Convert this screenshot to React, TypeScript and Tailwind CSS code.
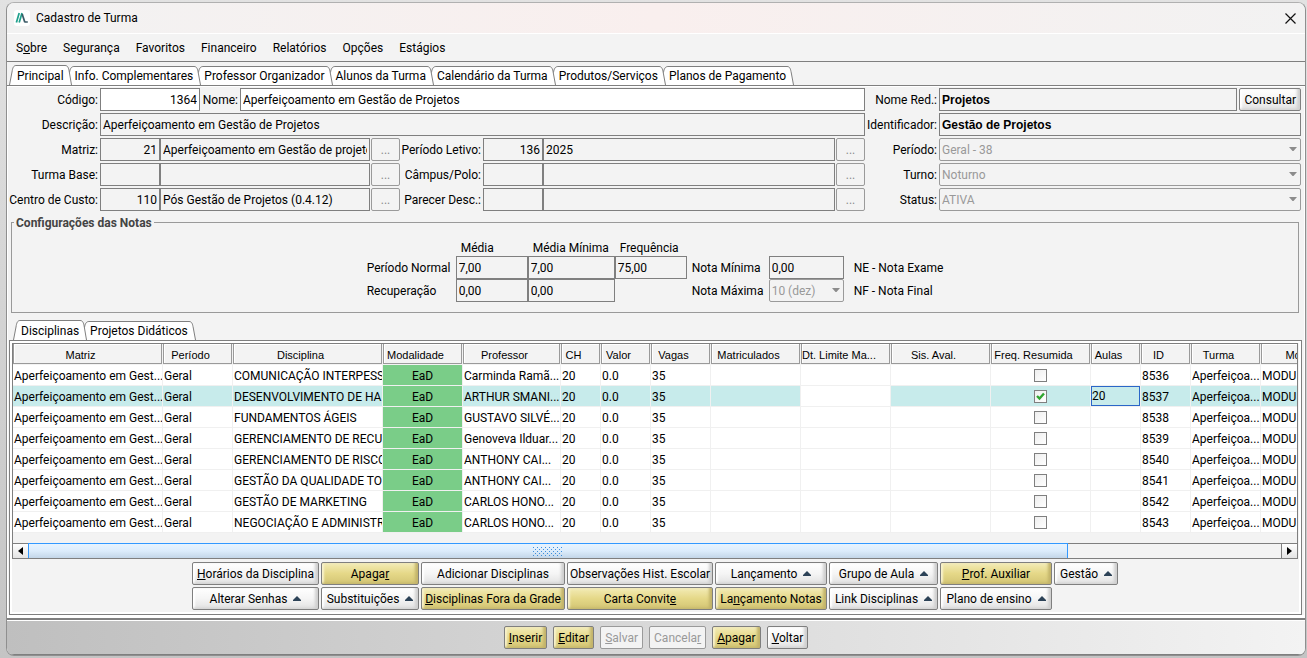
import { Fragment, type ReactNode } from "react";
import clsx from "clsx";

type Row = {
  disciplina: string;
  professor: string;
  id: string;
  selected?: boolean;
};

const rows: Row[] = [
  { disciplina: "COMUNICAÇÃO INTERPESS", professor: "Carminda Ramã...", id: "8536" },
  { disciplina: "DESENVOLVIMENTO DE HAB", professor: "ARTHUR SMANI...", id: "8537", selected: true },
  { disciplina: "FUNDAMENTOS ÁGEIS", professor: "GUSTAVO SILVÉ...", id: "8538" },
  { disciplina: "GERENCIAMENTO DE RECUR", professor: "Genoveva Ilduar...", id: "8539" },
  { disciplina: "GERENCIAMENTO DE RISCO", professor: "ANTHONY CAI...", id: "8540" },
  { disciplina: "GESTÃO DA QUALIDADE TOT", professor: "ANTHONY CAI...", id: "8541" },
  { disciplina: "GESTÃO DE MARKETING", professor: "CARLOS HONO...", id: "8542" },
  { disciplina: "NEGOCIAÇÃO E ADMINISTR", professor: "CARLOS HONO...", id: "8543" }
];

const columns = [
  { label: "Matriz", width: "w-[150px]" },
  { label: "Período", width: "w-[70px]" },
  { label: "Disciplina", width: "w-[150px]" },
  { label: "Modalidade", width: "w-[80px]" },
  { label: "Professor", width: "w-[98px]" },
  { label: "CH", width: "w-[40px]" },
  { label: "Valor", width: "w-[50px]" },
  { label: "Vagas", width: "w-[60px]" },
  { label: "Matriculados", width: "w-[90px]" },
  { label: "Dt. Limite Ma...", width: "w-[90px]" },
  { label: "Sis. Aval.", width: "w-[100px]" },
  { label: "Freq. Resumida", width: "w-[100px]" },
  { label: "Aulas", width: "w-[50px]" },
  { label: "ID", width: "w-[50px]" },
  { label: "Turma", width: "w-[70px]" },
  { label: "Módulo", width: "w-[100px]" }
];

const menu = ["Segurança", "Favoritos", "Financeiro", "Relatórios", "Opções", "Estágios"];

const mainTabs = [
  "Principal",
  "Info. Complementares",
  "Professor Organizador",
  "Alunos da Turma",
  "Calendário da Turma",
  "Produtos/Serviços",
  "Planos de Pagamento"
];

function TabStrip({ tabs }: { tabs: string[] }) {
  return (
    <div role="tablist" className="flex h-5 items-end">
      <svg width="7" height="20" viewBox="0 0 7 20" fill="#fff" stroke="#7f7f7f" className="shrink-0">
        <path d="M0.5 20 L3 7 C3.6 3 4.5 0.5 7 0.5 V20" stroke="none" />
        <path d="M0.5 20 L3 7 C3.6 3 4.5 0.5 7 0.5" fill="none" />
      </svg>
      {tabs.map((tab, i) => {
        const last = i === tabs.length - 1;
        return (
          <Fragment key={tab}>
            <button
              role="tab"
              aria-selected={i === 0}
              className={clsx(
                "shrink-0 whitespace-nowrap border-t border-[#7f7f7f] bg-white px-px leading-[18px]",
                i === 0 ? "h-5" : "h-[19px]"
              )}
            >
              {tab}
            </button>
            <svg width={last ? 8 : 9} height="20" viewBox={last ? "0 0 8 20" : "0 0 9 20"} fill="none" className="shrink-0">
              {!last && <path d="M9 1.5 C6.5 1.5 5 4 4 8 L6.5 20 H9 Z" fill="#fff" />}
              <path
                d={i === 0 ? "M0 0.5 C3 0.5 3.5 3 4.3 7 L6.5 20 H0 Z" : "M0 1.5 C3 1.5 3.5 4 4.3 8 L6.5 20 H0 Z"}
                fill="#fff"
              />
              <path
                d={i === 0 ? "M0 0.5 C3 0.5 3.5 3 4.3 7 L6.5 20" : "M0 1.5 C3 1.5 3.5 4 4.3 8 L6.5 20"}
                stroke="#7f7f7f"
              />
              {!last && <path d="M9 1.5 C6.5 1.5 5 3.5 4.5 7.5" stroke="#7f7f7f" />}
            </svg>
          </Fragment>
        );
      })}
    </div>
  );
}

function Field({
  id,
  label,
  value = "",
  className
}: {
  id: string;
  label?: string;
  value?: string;
  className?: string;
}) {
  return (
    <input
      id={id}
      aria-label={label}
      defaultValue={value}
      className={clsx("h-[23px] min-w-0 border border-[#7f7f7f] px-0.5 outline-none", className)}
    />
  );
}

function FieldLabel({ htmlFor, className, children }: { htmlFor: string; className: string; children: ReactNode }) {
  return (
    <label htmlFor={htmlFor} className={clsx("shrink-0 whitespace-nowrap text-right", className)}>
      {children}
    </label>
  );
}

function LookupButton({ label }: { label: string }) {
  return (
    <button
      disabled
      aria-label={label}
      className="ml-px h-[23px] w-[29px] shrink-0 rounded-xs border border-[#9a9a9a] text-[#8c8c8c]"
    >
      ...
    </button>
  );
}

function Lookup({
  id,
  label,
  labelWidth,
  code,
  text,
  textWidth
}: {
  id: string;
  label: string;
  labelWidth: string;
  code?: string;
  text?: string;
  textWidth: string;
}) {
  return (
    <>
      <FieldLabel htmlFor={id} className={clsx("mr-0.5", labelWidth)}>
        {label}
      </FieldLabel>
      <Field id={id} value={code} className="w-[60px] shrink-0 text-right" />
      <Field id={`${id}-text`} label={label} value={text} className={textWidth} />
      <LookupButton label={`Buscar ${label}`} />
    </>
  );
}

function Combo({ id, value, label }: { id: string; value: string; label?: string }) {
  return (
    <div className="relative flex-1">
      <select
        id={id}
        disabled
        aria-label={label}
        className="h-[23px] w-full appearance-none rounded-xs border border-[#9a9a9a] px-0.5 text-[#999] opacity-100"
      >
        <option>{value}</option>
      </select>
      <svg width="8" height="4" viewBox="0 0 8 4" className="pointer-events-none absolute right-1 top-[9px]">
        <path d="M0 0H8L4.5 4H3.5Z" fill="#8c8c8c" />
      </svg>
    </div>
  );
}

function ActionButton({
  children,
  gold,
  menu: hasMenu,
  disabled
}: {
  children: ReactNode;
  gold?: boolean;
  menu?: boolean;
  disabled?: boolean;
}) {
  return (
    <button
      disabled={disabled}
      className={clsx(
        "flex h-[23px] items-center justify-center gap-1.5 whitespace-nowrap rounded-xs border px-1",
        disabled && "border-[#9a9a9a] bg-[#f3f3f3] text-[#999]",
        !disabled && "border-[#7f7f7f]",
        gold &&
          "bg-linear-to-b from-[#f3ebb5] via-[#e5d888] to-[#d3c574] shadow-[inset_-3px_-1px_3px_#c2b36a,inset_2px_1px_2px_#f8f2cc]",
        !gold &&
          !disabled &&
          "bg-linear-to-b from-white via-[#f5f5f5] to-[#e2e2e2] shadow-[inset_-3px_-1px_3px_#cfcfcf,inset_2px_1px_2px_#fff]"
      )}
    >
      <span>{children}</span>
      {hasMenu && (
        <svg width="8" height="5" viewBox="0 0 8 5">
          <path d="M4 0L8 4V5H0V4Z" fill="#2c4257" />
        </svg>
      )}
    </button>
  );
}

function DisciplineTable() {
  return (
    <div className="overflow-hidden">
      <table className="w-[1348px] table-fixed border-separate border-spacing-0">
        <thead>
          <tr className="h-[21px]">
            {columns.map((column) => (
              <th key={column.label} className={clsx("p-0 font-normal", column.width)}>
                <div className="mr-px mb-px h-5 overflow-hidden whitespace-nowrap border border-t-0 border-[#9a9a9a] bg-[#f3f3f3] pr-3.5 font-['Liberation_Sans',Arial,sans-serif] text-[11px] leading-[22px] shadow-[inset_1px_1px_0_#fff]">
                  {column.label}
                </div>
              </th>
            ))}
          </tr>
        </thead>
        <tbody>
          {rows.map((row) => (
            <tr
              key={row.id}
              className={clsx(
                "h-[21px] *:overflow-hidden *:whitespace-nowrap *:border-r *:border-b *:border-[#f0f0f0] *:px-px *:pt-0.5 *:pb-0",
                row.selected ? "bg-[#c7ebeb]" : "bg-white"
              )}
            >
              <td>Aperfeiçoamento em Gest...</td>
              <td>Geral</td>
              <td>{row.disciplina}</td>
              <td className="bg-[#7acd88] text-center">EaD</td>
              <td>{row.professor}</td>
              <td>20</td>
              <td>0.0</td>
              <td>35</td>
              <td />
              <td className="bg-white" />
              <td />
              <td className="pt-0!">
                <label className="relative mx-auto block size-[13px]">
                  <input
                    type="checkbox"
                    aria-label={`Freq. Resumida ${row.id}`}
                    defaultChecked={row.selected}
                    className="block size-[13px] appearance-none border border-[#7f7f7f] bg-linear-to-br from-[#eee] to-white"
                  />
                  {row.selected && (
                    <svg width="9" height="9" viewBox="0 0 9 9" fill="none" className="absolute left-0.5 top-0.5">
                      <path d="M1 4L3.5 6.5L8 1.5" stroke="#2fa52f" strokeWidth="2.4" />
                    </svg>
                  )}
                </label>
              </td>
              <td className="pt-0!">
                {row.selected && (
                  <input
                    aria-label="Aulas"
                    defaultValue="20"
                    className="-mx-px block h-5 w-[49px] border border-[#2a66c8] outline-none"
                  />
                )}
              </td>
              <td>{row.id}</td>
              <td>Aperfeiçoa...</td>
              <td>MODU</td>
            </tr>
          ))}
        </tbody>
      </table>
    </div>
  );
}

function ScrollBar() {
  return (
    <div className="mt-2.5 flex h-4 border-t border-b border-[#7f7f7f] bg-[#f3f3f3]">
      <button aria-label="Rolar para a esquerda" className="flex w-[15px] items-center justify-center bg-linear-to-b from-white to-[#e4e4e4]">
        <svg width="5" height="8" viewBox="0 0 5 8">
          <path d="M5 0V8L0 4Z" />
        </svg>
      </button>
      <div className="flex flex-1">
        <div className="-mt-px flex w-[83%] items-center justify-center border border-b-0 border-[#3399ff] bg-linear-to-b from-[#e8f4ff] via-[#dcecfb] to-[#c3d6e8]">
          <svg width="30" height="9">
            <defs>
              <pattern id="grip" width="4" height="4" patternUnits="userSpaceOnUse">
                <rect width="1" height="1" fill="#3f8fdc" />
                <rect x="2" y="2" width="1" height="1" fill="#3f8fdc" />
              </pattern>
            </defs>
            <rect width="30" height="9" fill="url(#grip)" />
          </svg>
        </div>
      </div>
      <button aria-label="Rolar para a direita" className="flex w-4 items-center justify-center border-l border-[#7f7f7f] bg-linear-to-b from-white to-[#e4e4e4]">
        <svg width="5" height="8" viewBox="0 0 5 8">
          <path d="M0 0V8L5 4Z" />
        </svg>
      </button>
    </div>
  );
}

function TitleBar() {
  return (
    <header className="flex h-[31px] items-center gap-1.5 border-b border-white bg-linear-to-r from-[#f2f2f2] via-[#f9efee] to-[#f2f2f2] pr-[9px] pl-[7px]">
      <svg width="16" height="16" viewBox="0 0 16 16" fill="none">
        <rect width="16" height="16" rx="3" fill="#fff" />
        <path d="M2.4 12.5L5.2 3" stroke="#1fa08c" strokeWidth="1.7" />
        <path d="M5.2 12.5L8 3" stroke="#1fa08c" strokeWidth="1.7" />
        <path d="M8.2 4L10.8 12.2" stroke="#3b5a66" strokeWidth="1.7" />
        <path d="M10.6 11.9H13.8" stroke="#3b5a66" strokeWidth="1.5" />
      </svg>
      <h1 className="flex-1">Cadastro de Turma</h1>
      <button aria-label="Fechar">
        <svg width="11" height="11" viewBox="0 0 11 11" stroke="#111" strokeWidth="1.2">
          <path d="M0.5 0.5L10.5 10.5M10.5 0.5L0.5 10.5" />
        </svg>
      </button>
    </header>
  );
}

function ClassForm() {
  return (
    <div className="flex gap-0.5 pr-1">
      <div className="flex min-w-0 flex-1 flex-col gap-0.5 *:flex *:items-center">
        <div>
          <FieldLabel htmlFor="codigo" className="mr-0.5 w-[91px]">Código:</FieldLabel>
          <Field id="codigo" value="1364" className="w-[100px] shrink-0 bg-white text-right" />
          <FieldLabel htmlFor="nome" className="mr-0.5 w-[38px]">Nome:</FieldLabel>
          <Field id="nome" value="Aperfeiçoamento em Gestão de Projetos" className="flex-1 bg-white" />
        </div>
        <div>
          <FieldLabel htmlFor="descricao" className="mr-0.5 w-[91px]">Descrição:</FieldLabel>
          <Field id="descricao" value="Aperfeiçoamento em Gestão de Projetos" className="flex-1" />
        </div>
        <div>
          <Lookup id="matriz" label="Matriz:" labelWidth="w-[91px]" code="21" text="Aperfeiçoamento em Gestão de projetos" textWidth="w-[210px]" />
          <Lookup id="letivo" label="Período Letivo:" labelWidth="w-[81px]" code="136" text="2025" textWidth="flex-1" />
        </div>
        <div>
          <Lookup id="base" label="Turma Base:" labelWidth="w-[91px]" textWidth="w-[210px]" />
          <Lookup id="campus" label="Câmpus/Polo:" labelWidth="w-[81px]" textWidth="flex-1" />
        </div>
        <div>
          <Lookup id="custo" label="Centro de Custo:" labelWidth="w-[91px]" code="110" text="Pós Gestão de Projetos (0.4.12)" textWidth="w-[210px]" />
          <Lookup id="parecer" label="Parecer Desc.:" labelWidth="w-[81px]" textWidth="flex-1" />
        </div>
      </div>

      <div className="flex w-[434px] flex-col gap-0.5 *:flex *:items-center *:gap-0.5">
        <div>
          <FieldLabel htmlFor="reduzido" className="w-[70px]">Nome Red.:</FieldLabel>
          <Field id="reduzido" value="Projetos" className="flex-1 font-['Liberation_Sans',Arial,sans-serif] font-bold" />
          <ActionButton>Consultar</ActionButton>
        </div>
        <div>
          <FieldLabel htmlFor="identificador" className="w-[70px]">Identificador:</FieldLabel>
          <Field id="identificador" value="Gestão de Projetos" className="flex-1 font-['Liberation_Sans',Arial,sans-serif] font-bold" />
        </div>
        <div>
          <FieldLabel htmlFor="periodo" className="w-[70px]">Período:</FieldLabel>
          <Combo id="periodo" value="Geral - 38" />
        </div>
        <div>
          <FieldLabel htmlFor="turno" className="w-[70px]">Turno:</FieldLabel>
          <Combo id="turno" value="Noturno" />
        </div>
        <div>
          <FieldLabel htmlFor="status" className="w-[70px]">Status:</FieldLabel>
          <Combo id="status" value="ATIVA" />
        </div>
      </div>
    </div>
  );
}

function GradeSettings() {
  return (
    <fieldset className="mt-0.5 mr-1.5 ml-1 h-[100px] border border-[#999]">
      <legend className="ml-0.5 px-0.5 pt-0.5 font-bold leading-4 text-[#444]">Configurações das Notas</legend>
      <div className="mt-2 grid grid-cols-[89px_72px_87px_77px_77px_85px_auto] items-center justify-center">
        <span />
        <span className="pt-px pl-[5px]">Média</span>
        <span className="pt-px pl-[5px]">Média Mínima</span>
        <span className="pt-px pl-[5px]">Frequência</span>
        <span className="col-span-3" />

        <span>Período Normal</span>
        <Field id="media" label="Média" value="7,00" className="w-[72px]" />
        <Field id="media-minima" label="Média Mínima" value="7,00" className="w-[87px]" />
        <Field id="frequencia" label="Frequência" value="75,00" className="w-[72px]" />
        <label htmlFor="nota-minima">Nota Mínima</label>
        <Field id="nota-minima" value="0,00" className="w-[75px]" />
        <span>NE - Nota Exame</span>

        <span>Recuperação</span>
        <Field id="rec-media" label="Média recuperação" value="0,00" className="w-[72px]" />
        <Field id="rec-minima" label="Média Mínima recuperação" value="0,00" className="w-[87px]" />
        <span />
        <label htmlFor="nota-maxima">Nota Máxima</label>
        <div className="flex w-[75px]">
          <Combo id="nota-maxima" value="10 (dez)" />
        </div>
        <span>NF - Nota Final</span>
      </div>
    </fieldset>
  );
}

export default function App() {
  return (
    <div className="flex min-h-screen flex-col bg-linear-to-b from-[#e2e2e2] to-[#c4c4c4] pt-0.5 pr-px pb-0.5 pl-1.5 font-[Roboto,sans-serif] text-[12px] leading-4 text-black">
      <div className="flex flex-1 flex-col overflow-hidden rounded-lg border border-[#8f8f8f] border-t-[#b0b0b0] bg-[#f3f3f3]">
        <TitleBar />

        <nav className="flex h-7 items-center gap-4 border-b border-[#7f7f7f] pl-[9px]">
          <button>
            S<u>o</u>bre
          </button>
          {menu.map((item) => (
            <button key={item}>{item}</button>
          ))}
        </nav>

        <div className="flex h-6 items-end border-b border-[#7f7f7f] pt-[3px] pl-0.5">
          <TabStrip tabs={mainTabs} />
        </div>

        <main className="flex flex-1 flex-col border-b-2 border-[#7f7f7f] pt-0.5 pb-[3px] shadow-[inset_0_0_0_1px_#fff,inset_0_-3px_0_#fff]">
          <ClassForm />
          <GradeSettings />

          <div className="mt-[7px] pl-1.5">
            <TabStrip tabs={["Disciplinas", "Projetos Didáticos"]} />
          </div>
          <section className="mr-[3px] ml-0.5 flex-1 border border-[#7f7f7f] pt-0.5 pr-[3px] pl-0.5 shadow-[inset_0_0_0_2px_#fff]">
            <div className="border border-b-0 border-[#7f7f7f]">
              <DisciplineTable />
              <ScrollBar />
            </div>
            <div className="mt-[3px] grid grid-cols-[127px_98px_144px_146px_112px_109px_112px_64px] justify-center gap-0.5">
              <ActionButton><u>H</u>orários da Disciplina</ActionButton>
              <ActionButton gold>Apaga<u>r</u></ActionButton>
              <ActionButton>Adicionar Disciplinas</ActionButton>
              <ActionButton>Observações Hist. Escolar</ActionButton>
              <ActionButton menu>Lançamento</ActionButton>
              <ActionButton menu>Grupo de Aula</ActionButton>
              <ActionButton gold><u>P</u>rof. Auxiliar</ActionButton>
              <ActionButton menu>Gestão</ActionButton>
              <ActionButton menu>Alterar Senhas</ActionButton>
              <ActionButton menu>Substituições</ActionButton>
              <ActionButton gold><u>D</u>isciplinas Fora da Grade</ActionButton>
              <ActionButton gold>Carta Convit<u>e</u></ActionButton>
              <ActionButton gold>La<u>n</u>çamento Notas</ActionButton>
              <ActionButton menu>Link Disciplinas</ActionButton>
              <ActionButton menu>Plano de ensino</ActionButton>
            </div>
          </section>
        </main>

        <footer className="flex h-[35px] items-center justify-center gap-1.5 border-t border-b border-t-white border-b-[#7f7f7f] bg-linear-to-r from-[#bfbfbf] to-[#f3f3f3]">
          <ActionButton gold><u>I</u>nserir</ActionButton>
          <ActionButton gold><u>E</u>ditar</ActionButton>
          <ActionButton disabled><u>S</u>alvar</ActionButton>
          <ActionButton disabled>Cancela<u>r</u></ActionButton>
          <ActionButton gold><u>A</u>pagar</ActionButton>
          <ActionButton><u>V</u>oltar</ActionButton>
        </footer>
      </div>
    </div>
  );
}
